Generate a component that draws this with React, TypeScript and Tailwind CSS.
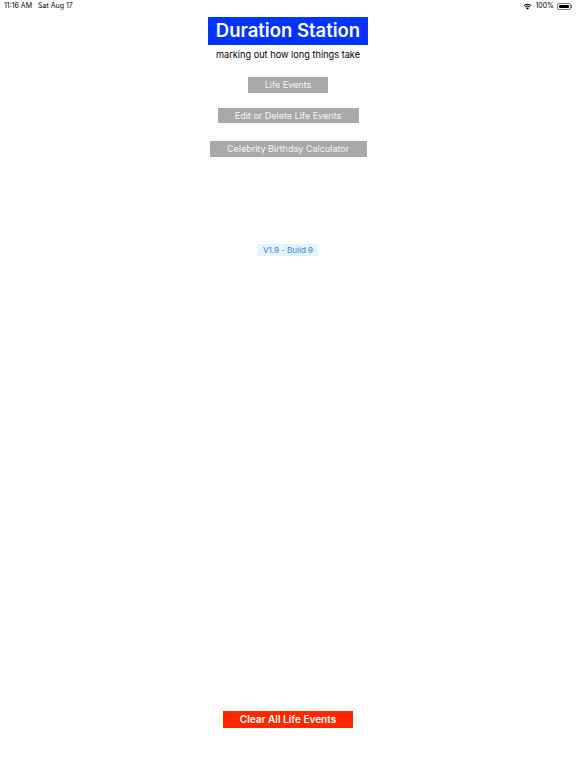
import React from "react";

export default function App() {
  const font = { fontFamily: "Inter, 'Liberation Sans', sans-serif" };
  return (
    <div className="w-[576px] h-[768px] bg-white flex flex-col items-center relative" style={font}>
      {/* status bar */}
      <div className="w-full h-[12px] flex items-center justify-between px-[4px] text-[7px] text-black">
        <div className="flex gap-[6px]">
          <span>11:16 AM</span>
          <span>Sat Aug 17</span>
        </div>
        <div className="flex items-center gap-[3px]">
          <svg width="9" height="7" viewBox="0 0 18 13">
            <path d="M9 13 L6 9.6 A4.5 4.5 0 0 1 12 9.6 Z" fill="black" />
            <path d="M3.6 7 A7.8 7.8 0 0 1 14.4 7 L13 8.5 A5.8 5.8 0 0 0 5 8.5 Z" fill="black" />
            <path d="M1 4.2 A11.5 11.5 0 0 1 17 4.2 L15.6 5.7 A9.5 9.5 0 0 0 2.4 5.7 Z" fill="black" />
          </svg>
          <span>100%</span>
          <div className="flex items-center">
            <div className="w-[14px] h-[7px] rounded-[2px] border border-black/50 p-[1px]">
              <div className="w-full h-full bg-black rounded-[1px]" />
            </div>
            <div className="w-[1px] h-[3px] bg-black/50" />
          </div>
        </div>
      </div>

      <div className="mt-[5px] w-[160px] h-[28px] bg-[#0433ff] flex items-center justify-center text-white text-[18.5px] font-semibold">
        Duration Station
      </div>
      <div className="mt-[3px] text-[9.2px] text-black leading-[14px]">marking out how long things take</div>

      <div className="mt-[15px] w-[80px] h-[16px] bg-[#a9a9a9] text-[#f4f4f4] text-[9px] flex items-center justify-center">
        Life Events
      </div>
      <div className="mt-[15px] w-[141px] h-[15px] bg-[#a9a9a9] text-[#f4f4f4] text-[9px] flex items-center justify-center">
        Edit or Delete Life Events
      </div>
      <div className="mt-[18px] w-[157px] h-[16px] bg-[#a9a9a9] text-[#f4f4f4] text-[9px] flex items-center justify-center">
        Celebrity Birthday Calculator
      </div>

      <div className="mt-[87px] w-[60px] h-[12px] bg-[#e2f7fc] text-[#3a7dd4] text-[8px] flex items-center justify-center">
        V1.9 - Build 9
      </div>

      <div className="flex-1" />
      <div className="mb-[40px] w-[130px] h-[17px] bg-[#ff2600] text-white text-[10px] font-semibold flex items-center justify-center">
        Clear All Life Events
      </div>
    </div>
  );
}
